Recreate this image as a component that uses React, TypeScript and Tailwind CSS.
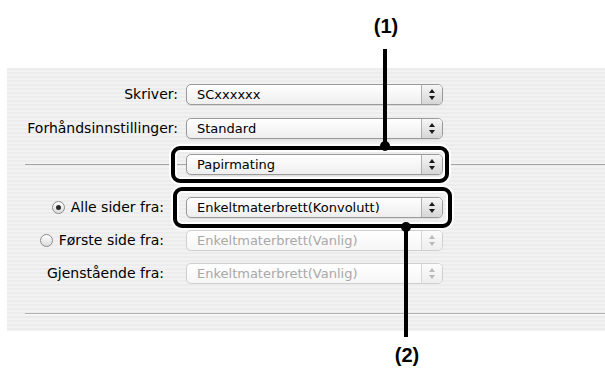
import React from 'react';

const Stepper: React.FC<{ disabled?: boolean }> = ({ disabled }) => {
  const c = disabled ? '#b9b9b9' : '#1a1a1a';
  return (
    <div
      className={`flex w-[21px] flex-col items-center justify-center gap-[3px] rounded-r-[4px] border-l ${
        disabled ? 'border-[#d6d6d6] bg-gradient-to-b from-[#fbfbfb] to-[#eeeeee]' : 'border-[#b0b0b0] bg-gradient-to-b from-[#f6f6f6] to-[#d6d6d6]'
      }`}
    >
      <svg width="6" height="4" viewBox="0 0 6 4">
        <path d="M3 0 L6 4 L0 4 Z" fill={c} />
      </svg>
      <svg width="6" height="4" viewBox="0 0 6 4">
        <path d="M0 0 L6 0 L3 4 Z" fill={c} />
      </svg>
    </div>
  );
};

const Select: React.FC<{ text: string; disabled?: boolean }> = ({ text, disabled }) => (
  <div
    className={`flex h-[21px] w-[257px] shrink-0 rounded-[5px] border ${
      disabled
        ? 'border-[#cfcfcf] bg-gradient-to-b from-white to-[#f6f6f6] text-[#a8a8a8]'
        : 'border-[#9a9a9a] bg-gradient-to-b from-white to-[#eeeeee] text-black shadow-[0_1px_1px_rgba(0,0,0,0.08)]'
    }`}
  >
    <div className="flex-1 truncate pl-[10px] text-[13px] leading-[19px]">{text}</div>
    <Stepper disabled={disabled} />
  </div>
);

const Radio: React.FC<{ checked?: boolean }> = ({ checked }) => (
  <div className="flex h-[13px] w-[13px] items-center justify-center rounded-full border border-[#8c8c8c] bg-gradient-to-b from-white to-[#dcdcdc]">
    {checked && <div className="h-[5px] w-[5px] rounded-full bg-[#2a2a2a]" />}
  </div>
);

export default function App() {
  return (
    <div className="relative h-[374px] w-[605px] overflow-hidden bg-white font-['DejaVu_Sans',sans-serif] text-[14px] text-black">
      <div className="h-[68px]" />

      <div className="ml-[7px] flex h-[263px] flex-col bg-[repeating-linear-gradient(180deg,#ececec_0px,#ececec_2px,#f2f2f2_2px,#f2f2f2_4px)] pt-[16px]">
        <div className="flex h-[21px] items-center">
          <div className="w-[171px] text-right">Skriver:</div>
          <div className="ml-[8px]">
            <Select text="SCxxxxxx" />
          </div>
        </div>
        <div className="mt-[13px] flex h-[21px] items-center">
          <div className="w-[171px] text-right">Forhåndsinnstillinger:</div>
          <div className="ml-[8px]">
            <Select text="Standard" />
          </div>
        </div>

        <div className="mt-[15px] flex h-[21px] items-center">
          <div className="ml-[18px] h-px w-[161px] bg-[#a5a5a5]" />
          <Select text="Papirmating" />
          <div className="h-px flex-1 bg-[#a5a5a5]" />
        </div>

        <div className="mt-[22px] flex h-[21px] items-center">
          <div className="flex w-[157px] items-center justify-end gap-[6px]">
            <Radio checked />
            <span>Alle sider fra:</span>
          </div>
          <div className="ml-[22px]">
            <Select text="Enkeltmaterbrett(Konvolutt)" />
          </div>
        </div>
        <div className="mt-[12px] flex h-[21px] items-center">
          <div className="flex w-[157px] items-center justify-end gap-[6px]">
            <Radio />
            <span>Første side fra:</span>
          </div>
          <div className="ml-[22px]">
            <Select text="Enkeltmaterbrett(Vanlig)" disabled />
          </div>
        </div>
        <div className="mt-[12px] flex h-[21px] items-center">
          <div className="w-[157px] text-right">Gjenstående fra:</div>
          <div className="ml-[22px]">
            <Select text="Enkeltmaterbrett(Vanlig)" disabled />
          </div>
        </div>

        <div className="ml-[18px] mt-[29px] h-px bg-[#b0b0b0] shadow-[0_1px_0_#fafafa]" />
      </div>

      {/* callout (1) */}
      <div className="absolute left-[371px] top-[14px] w-[30px] text-center font-['Liberation_Sans',sans-serif] text-[20px] font-bold leading-[24px]">
        (1)
      </div>
      <div className="absolute left-[383px] top-[49px] h-[98px] w-[4px] bg-black" />
      <div className="absolute left-[171px] top-[146px] h-[37px] w-[278px] rounded-[9px] border-[4px] border-black shadow-[0_0_0_2px_#fff,inset_0_0_0_2px_#fff]" />
      <div className="absolute left-[380px] top-[141px] h-[10px] w-[10px] rounded-full bg-black" />

      {/* callout (2) */}
      <div className="absolute left-[173px] top-[187px] h-[41px] w-[279px] rounded-[9px] border-[4px] border-black shadow-[0_0_0_2px_#fff,inset_0_0_0_2px_#fff]" />
      <div className="absolute left-[404px] top-[227px] h-[110px] w-[4px] bg-black" />
      <div className="absolute left-[401px] top-[222px] h-[10px] w-[10px] rounded-full bg-black" />
      <div className="absolute left-[392px] top-[343px] w-[30px] text-center font-['Liberation_Sans',sans-serif] text-[20px] font-bold leading-[24px]">
        (2)
      </div>
    </div>
  );
}
